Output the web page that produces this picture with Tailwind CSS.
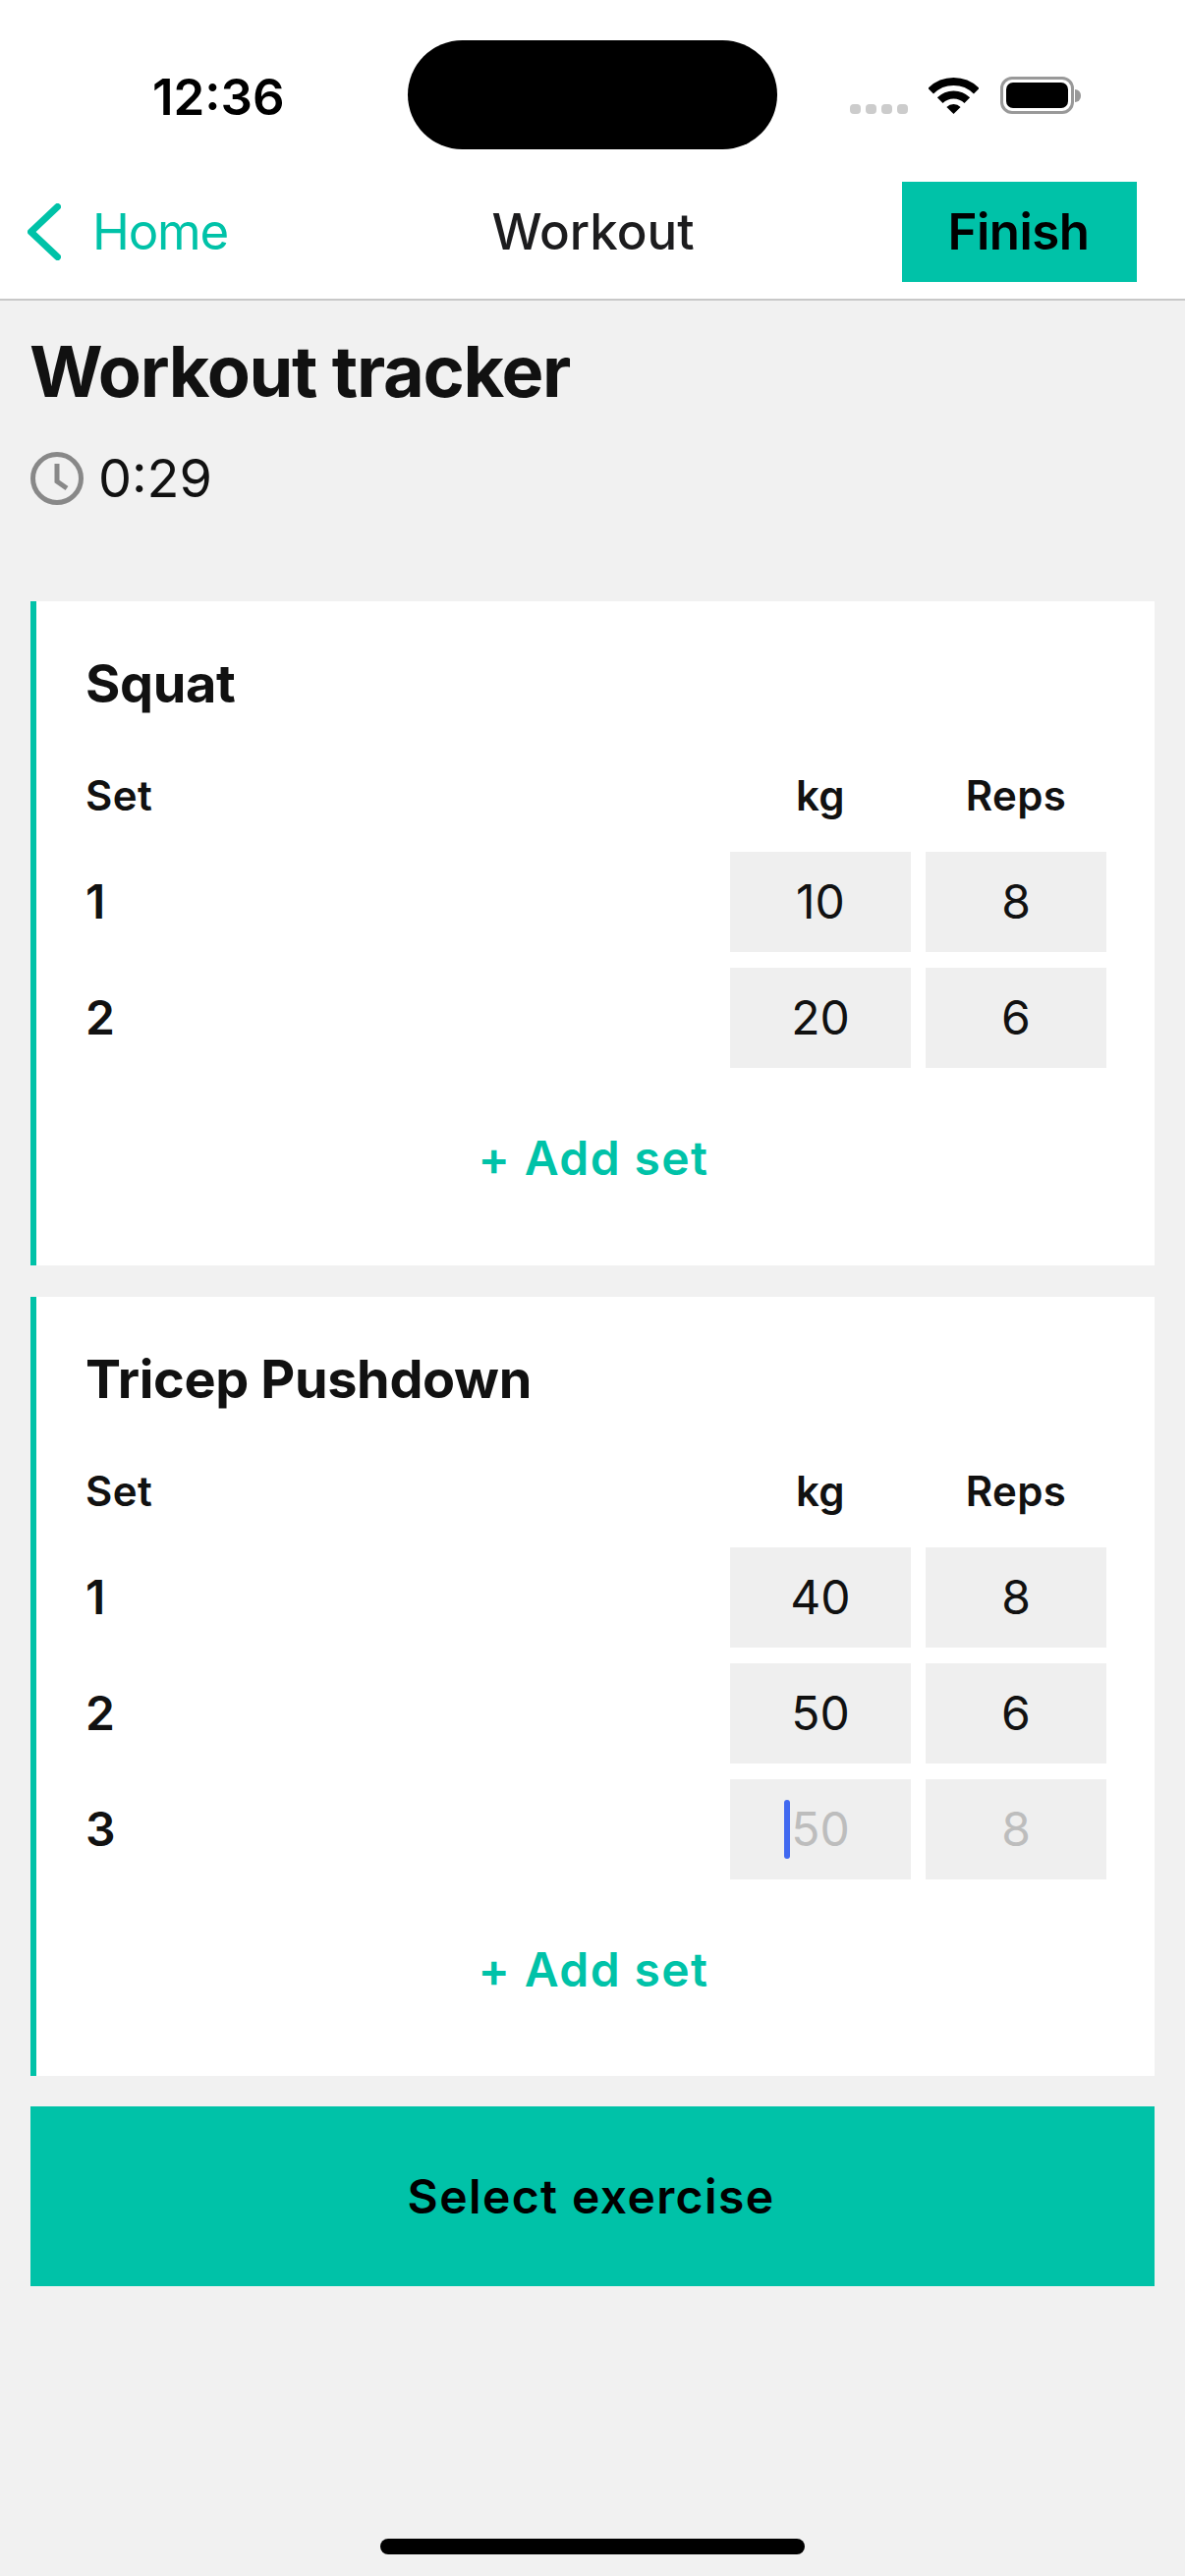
<!DOCTYPE html>
<html lang="en">
<head>
    <meta charset="UTF-8">
    <meta name="viewport" content="width=device-width, initial-scale=1.0">
    <title>Workout tracker</title>
    <script src="https://cdn.jsdelivr.net/npm/@tailwindcss/browser@4"></script>
</head>
<body class="bg-[#f1f1f1] text-[#111111] font-[Inter,sans-serif]">
    <div class="w-[1206px] h-[2622px] flex flex-col overflow-hidden">

        <!-- Status bar -->
        <div class="bg-white h-[185px] flex items-start">
            <div class="w-[415px] pl-[155px] pt-[69px] text-[51px] leading-[60px] font-semibold text-black">12:36</div>
            <div class="w-[376px] h-[111px] mt-[41px] bg-black rounded-[56px]"></div>
            <div class="flex items-end pl-[74px] pt-[78px]">
                <div class="flex gap-[5px]">
                    <span class="w-[11px] h-[10px] rounded-[4px] bg-[#cccccc]"></span>
                    <span class="w-[11px] h-[10px] rounded-[4px] bg-[#cccccc]"></span>
                    <span class="w-[11px] h-[10px] rounded-[4px] bg-[#cccccc]"></span>
                    <span class="w-[11px] h-[10px] rounded-[4px] bg-[#cccccc]"></span>
                </div>
                <svg class="ml-[21px]" width="51" height="38" viewBox="0 0 51 38" fill="none">
                    <path d="M2.2 14.7 A33 33 0 0 1 48.8 14.7" stroke="#000" stroke-width="8"/>
                    <path d="M11.7 24.2 A19.5 19.5 0 0 1 39.3 24.2" stroke="#000" stroke-width="8"/>
                    <path d="M25.5 38 L18.4 30.9 A10 10 0 0 1 32.6 30.9 Z" fill="#000"/>
                </svg>
                <div class="ml-[22px] w-[75px] h-[38px] rounded-[12px] border-[3px] border-[#999999] p-[3px]">
                    <div class="w-full h-full rounded-[7px] bg-black"></div>
                </div>
                <div class="w-[6px] h-[13px] mb-[12px] ml-[1px] rounded-r-full bg-[#999999]"></div>
            </div>
        </div>

        <!-- Nav bar -->
        <div class="bg-white h-[121px] border-b-2 border-[#c8c8c8] grid grid-cols-[1fr_auto_1fr] items-start">
            <div class="flex items-center h-[102px] pl-[28px]">
                <svg width="34" height="58" viewBox="0 0 34 58" fill="none">
                    <path d="M30.5 3.5 L3.5 29 L30.5 54.5" stroke="#00c2a8" stroke-width="7" stroke-linecap="round" stroke-linejoin="round"/>
                </svg>
                <span class="ml-[32px] text-[51px] leading-[60px] tracking-[-1.2px] text-[#00c2a8]">Home</span>
            </div>
            <div class="h-[102px] pl-[1px] flex items-center text-[51px] leading-[60px] font-medium text-[#1c1c1e]">Workout</div>
            <div class="flex justify-end pr-[49px]">
                <button class="w-[239px] h-[102px] pr-[2px] bg-[#00c2a8] text-[51px] leading-[60px] font-semibold tracking-[-0.5px] text-black">Finish</button>
            </div>
        </div>

        <!-- Content -->
        <div class="flex-1 flex flex-col px-[31px]">
            <h1 class="-ml-[1px] mt-[29px] text-[72px] leading-[86px] font-bold tracking-[-1.3px]">Workout tracker</h1>
            <div class="mt-[36px] flex items-center h-[60px]">
                <svg width="54" height="54" viewBox="0 0 54 54" fill="none">
                    <circle cx="27" cy="27" r="24.5" stroke="#888888" stroke-width="5"/>
                    <path d="M27 12 V30 L37 37" stroke="#888888" stroke-width="5"/>
                </svg>
                <span class="ml-[15px] text-[54px] leading-[60px]">0:29</span>
            </div>

            <!-- Squat -->
            <div class="mt-[95px] h-[676px] bg-white border-l-[6px] border-[#00c2a8] pl-[50px] pr-[49px] pt-[52px]">
                <h2 class="text-[54px] leading-[64px] font-bold tracking-[-0.35px]">Squat</h2>
                <div class="mt-[57px] grid grid-cols-[1fr_184px_184px] gap-x-[15px] gap-y-[16px] items-center">
                    <div class="mb-[16px] text-[42px] leading-[50px] font-semibold tracking-[0.4px]">Set</div>
                    <div class="mb-[16px] text-[42px] leading-[50px] font-semibold tracking-[0.4px] text-center">kg</div>
                    <div class="mb-[16px] text-[42px] leading-[50px] font-semibold tracking-[0.4px] text-center">Reps</div>

                    <div class="text-[48px] font-semibold">1</div>
                    <div class="h-[102px] bg-[#efefef] flex items-center justify-center text-[48px]">10</div>
                    <div class="h-[102px] bg-[#efefef] flex items-center justify-center text-[48px]">8</div>

                    <div class="text-[48px] font-semibold">2</div>
                    <div class="h-[102px] bg-[#efefef] flex items-center justify-center text-[48px]">20</div>
                    <div class="h-[102px] bg-[#efefef] flex items-center justify-center text-[48px]">6</div>
                </div>
                <div class="mt-[62px] pr-[5px] text-center text-[48px] leading-[60px] font-semibold tracking-[1.4px] text-[#00c2a8]">+ Add set</div>
            </div>

            <!-- Tricep Pushdown -->
            <div class="mt-[32px] h-[793px] bg-white border-l-[6px] border-[#00c2a8] pl-[50px] pr-[49px] pt-[52px]">
                <h2 class="text-[54px] leading-[64px] font-bold tracking-[-0.35px]">Tricep Pushdown</h2>
                <div class="mt-[57px] grid grid-cols-[1fr_184px_184px] gap-x-[15px] gap-y-[16px] items-center">
                    <div class="mb-[16px] text-[42px] leading-[50px] font-semibold tracking-[0.4px]">Set</div>
                    <div class="mb-[16px] text-[42px] leading-[50px] font-semibold tracking-[0.4px] text-center">kg</div>
                    <div class="mb-[16px] text-[42px] leading-[50px] font-semibold tracking-[0.4px] text-center">Reps</div>

                    <div class="text-[48px] font-semibold">1</div>
                    <div class="h-[102px] bg-[#efefef] flex items-center justify-center text-[48px]">40</div>
                    <div class="h-[102px] bg-[#efefef] flex items-center justify-center text-[48px]">8</div>

                    <div class="text-[48px] font-semibold">2</div>
                    <div class="h-[102px] bg-[#efefef] flex items-center justify-center text-[48px]">50</div>
                    <div class="h-[102px] bg-[#efefef] flex items-center justify-center text-[48px]">6</div>

                    <div class="text-[48px] font-semibold">3</div>
                    <div class="relative h-[102px] bg-[#efefef] flex items-center justify-center text-[48px] text-[#bdbdbd]">
                        50
                        <span class="absolute left-[55px] top-[21px] w-[6px] h-[60px] rounded-full bg-[#4169f0]"></span>
                    </div>
                    <div class="h-[102px] bg-[#efefef] flex items-center justify-center text-[48px] text-[#bdbdbd]">8</div>
                </div>
                <div class="mt-[62px] pr-[5px] text-center text-[48px] leading-[60px] font-semibold tracking-[1.4px] text-[#00c2a8]">+ Add set</div>
            </div>

            <button class="mt-[31px] h-[183px] pr-[3px] bg-[#00c2a8] text-[48px] font-semibold tracking-[1.4px] text-black">Select exercise</button>
        </div>

        <!-- Home indicator -->
        <div class="mb-[22px] mx-auto w-[432px] h-[16px] rounded-full bg-black"></div>
    </div>
</body>
</html>
